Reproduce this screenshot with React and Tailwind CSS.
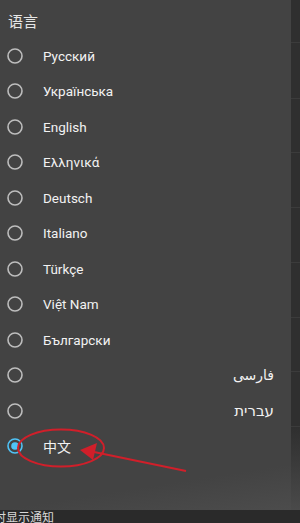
const langs = [
  { name: 'Русский' },
  { name: 'Українська' },
  { name: 'English' },
  { name: 'Ελληνικά' },
  { name: 'Deutsch' },
  { name: 'Italiano' },
  { name: 'Türkçe' },
  { name: 'Việt Nam' },
  { name: 'Български' },
  { name: 'فارسی', rtl: 'text-[14px]' },
  { name: 'עברית', rtl: 'text-[15px]' },
  { name: '中文', selected: true },
]

function Radio({ checked }) {
  return (
    <svg width="16" height="16" viewBox="0 0 16 16" className="shrink-0">
      <circle cx="8" cy="8" r="7" fill="none" stroke={checked ? '#4fc3f7' : '#bdbdbd'} strokeWidth="1.6" />
      {checked && <circle cx="8" cy="8" r="3.8" fill="#4fc3f7" />}
    </svg>
  )
}

export default function App() {
  return (
    <div className="relative w-[300px] h-[523px] overflow-hidden bg-[#2e2e2e] flex flex-col font-['Roboto','Noto_Sans','DejaVu_Sans','Noto_Sans_CJK_SC',sans-serif]">
      <div className="flex h-[510px]">
        <div className="w-[291px] bg-[#434343] flex flex-col">
          <div className="h-[38px] flex items-center pl-[8px] pt-[4px] text-[15px] text-[#e6e6e6] font-['Noto_Sans_CJK_SC',sans-serif]">
            语言
          </div>
          {langs.map(l => (
            <div key={l.name} className="h-[35.5px] flex items-center pl-[7px] pr-[17px]">
              <Radio checked={l.selected} />
              <span
                className={
                  'text-[#f2f2f2] ' +
                  (l.rtl ? 'ml-auto ' + l.rtl : 'ml-[20px] text-[13.5px]') +
                  (l.selected ? " font-['Noto_Sans_CJK_SC',sans-serif] text-[14px]" : '')
                }
              >
                {l.name}
              </span>
            </div>
          ))}
          <div className="flex-1 bg-gradient-to-br from-[#434343] via-[#434343] to-[#4c4c4c]" />
        </div>
        <div className="flex-1 flex flex-col bg-[#2f2f2f]">
          <div className="h-[43px] border-b border-[#3b3b3b]" />
          <div className="h-[56px] border-b border-[#3b3b3b]" />
          <div className="h-[54px] border-b border-[#3b3b3b]" />
          <div className="h-[55px] border-b border-[#3b3b3b]" />
          <div className="h-[55px] border-b border-[#3b3b3b]" />
          <div className="h-[55px] border-b border-[#3b3b3b]" />
          <div className="h-[54px] border-b border-[#3b3b3b]" />
          <div className="h-[55px] border-b border-[#3b3b3b]" />
          <div className="flex-1 bg-gradient-to-b from-[#2f2f2f] to-[#4a4a4a]" />
        </div>
      </div>
      <div className="flex-1 bg-[#2a2a2a] flex items-center overflow-hidden">
        <span className="-ml-[6px] text-[12px] leading-none text-[#d8d8d8] font-['Noto_Sans_CJK_SC',sans-serif] whitespace-nowrap">
          时显示通知
        </span>
      </div>
      <svg className="absolute left-0 top-0 pointer-events-none" width="300" height="523" viewBox="0 0 300 523">
        <ellipse cx="61" cy="448" rx="43" ry="18.5" fill="none" stroke="#d01f2a" strokeWidth="2" />
        <line x1="186" y1="471" x2="94" y2="452" stroke="#d01f2a" strokeWidth="2.2" />
        <polygon points="80,450 97,443 93,460" fill="#d01f2a" />
      </svg>
    </div>
  )
}
